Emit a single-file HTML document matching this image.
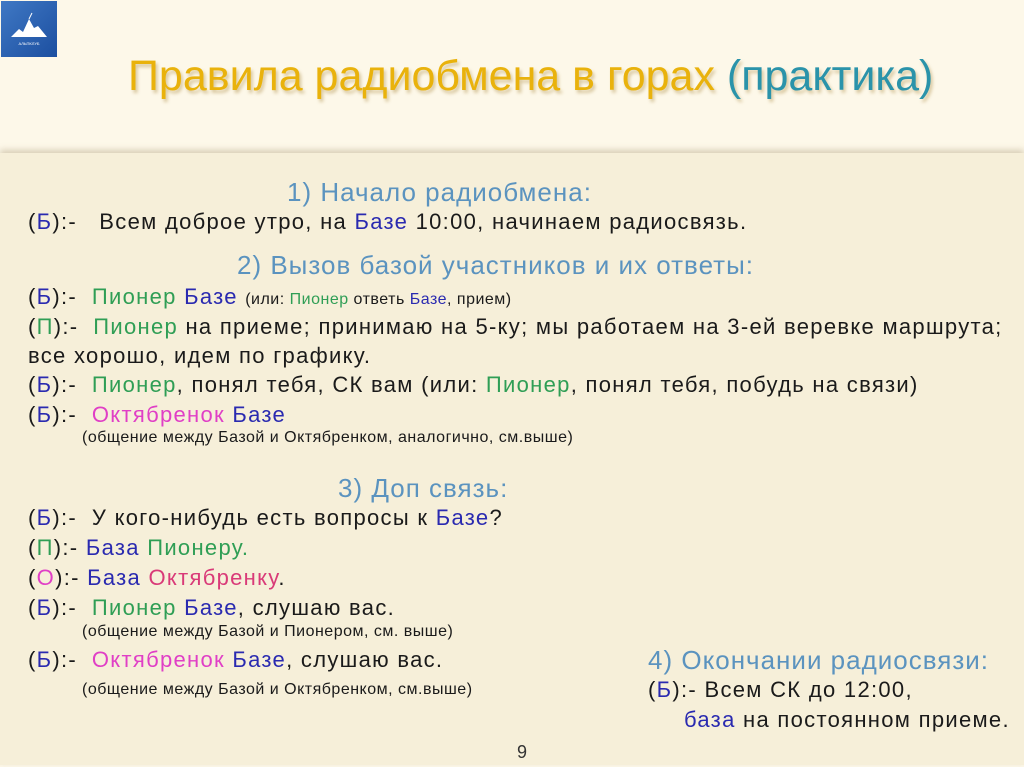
<!DOCTYPE html>
<html><head><meta charset="utf-8"><style>
body{margin:0;width:1024px;height:767px;overflow:hidden;background:#fdf8e9;font-family:"Liberation Sans","DejaVu Sans",sans-serif;position:relative}
.band{position:absolute;left:0;top:153px;width:1024px;height:612px;background:#f6efd9;box-shadow:0 -3px 6px rgba(150,130,90,.35)}
.l{position:absolute;white-space:nowrap;font-size:22px;letter-spacing:1.3px;color:#1a1a1a;line-height:1}
.h{color:#5b93bf;font-size:26px;letter-spacing:1px}
.s{font-size:16px;letter-spacing:.5px}
.b{color:#2a2ab0}.g{color:#2f9e55}.m{color:#e03fc6}.r{color:#d93a78}
.logo{position:absolute;left:1px;top:1px;width:56px;height:56px;background:linear-gradient(135deg,#3f78c4,#1c4fa0)}
.title{position:absolute;left:128px;top:52px;font-size:43px;color:#e9b20c;text-shadow:2px 3px 3px rgba(150,110,20,.35);white-space:nowrap}
</style></head><body>
<div class="logo"><svg width="56" height="56"><path d="M10 36 L18 28 L22 31 L28 18 L33 27 L37 25 L46 36 Z" fill="#fff"/><path d="M28 18 L31 12" stroke="#fff" stroke-width="1"/><text x="28" y="44" font-size="4" fill="#fff" text-anchor="middle">АЛЬПКЛУБ</text></svg></div>
<div class="title">Правила радиобмена в горах <span style="color:#2a93aa">(практика)</span></div>
<div class="band"></div>
<div class="l h" style="left:287px;top:179px">1) Начало радиобмена:</div>
<div class="l" style="left:28px;top:211px">(<span class="b">Б</span>):-&nbsp;&nbsp; Всем доброе утро, на <span class="b">Базе</span> 10:00, начинаем радиосвязь.</div>
<div class="l h" style="left:237px;top:252px">2) Вызов базой участников и их ответы:</div>
<div class="l" style="left:28px;top:286px">(<span class="b">Б</span>):-&nbsp; <span class="g">Пионер</span> <span class="b">Базе</span> <span class="s">(или: <span class="g">Пионер</span> ответь <span class="b">Базе</span>, прием)</span></div>
<div class="l" style="left:28px;top:316px">(<span class="g">П</span>):-&nbsp; <span class="g">Пионер</span> на приеме; принимаю на 5-ку; мы работаем на 3-ей веревке маршрута;</div>
<div class="l" style="left:28px;top:345px">все хорошо, идем по графику.</div>
<div class="l" style="left:28px;top:374px">(<span class="b">Б</span>):-&nbsp; <span class="g">Пионер</span>, понял тебя, СК вам (или: <span class="g">Пионер</span>, понял тебя, побудь на связи)</div>
<div class="l" style="left:28px;top:404px">(<span class="b">Б</span>):-&nbsp; <span class="m">Октябренок</span> <span class="b">Базе</span></div>
<div class="l s" style="left:82px;top:430px">(общение между Базой и Октябренком, аналогично, см.выше)</div>
<div class="l h" style="left:338px;top:475px">3) Доп связь:</div>
<div class="l" style="left:28px;top:507px">(<span class="b">Б</span>):-&nbsp; У кого-нибудь есть вопросы к <span class="b">Базе</span>?</div>
<div class="l" style="left:28px;top:537px">(<span class="g">П</span>):- <span class="b">База</span> <span class="g">Пионеру.</span></div>
<div class="l" style="left:28px;top:567px">(<span class="m">О</span>):- <span class="b">База</span> <span class="r">Октябренку</span>.</div>
<div class="l" style="left:28px;top:597px">(<span class="b">Б</span>):-&nbsp; <span class="g">Пионер</span> <span class="b">Базе</span>, слушаю вас.</div>
<div class="l s" style="left:82px;top:624px">(общение между Базой и Пионером, см. выше)</div>
<div class="l" style="left:28px;top:649px">(<span class="b">Б</span>):-&nbsp; <span class="m">Октябренок</span> <span class="b">Базе</span>, слушаю вас.</div>
<div class="l s" style="left:82px;top:682px">(общение между Базой и Октябренком, см.выше)</div>
<div class="l h" style="left:648px;top:647px">4) Окончании радиосвязи:</div>
<div class="l" style="left:648px;top:679px">(<span class="b">Б</span>):- Всем СК до 12:00,</div>
<div class="l" style="left:684px;top:709px"><span class="b">база</span> на постоянном приеме.</div>
<div class="l" style="left:517px;top:743px;font-size:18px;letter-spacing:0;color:#333">9</div>
</body></html>
